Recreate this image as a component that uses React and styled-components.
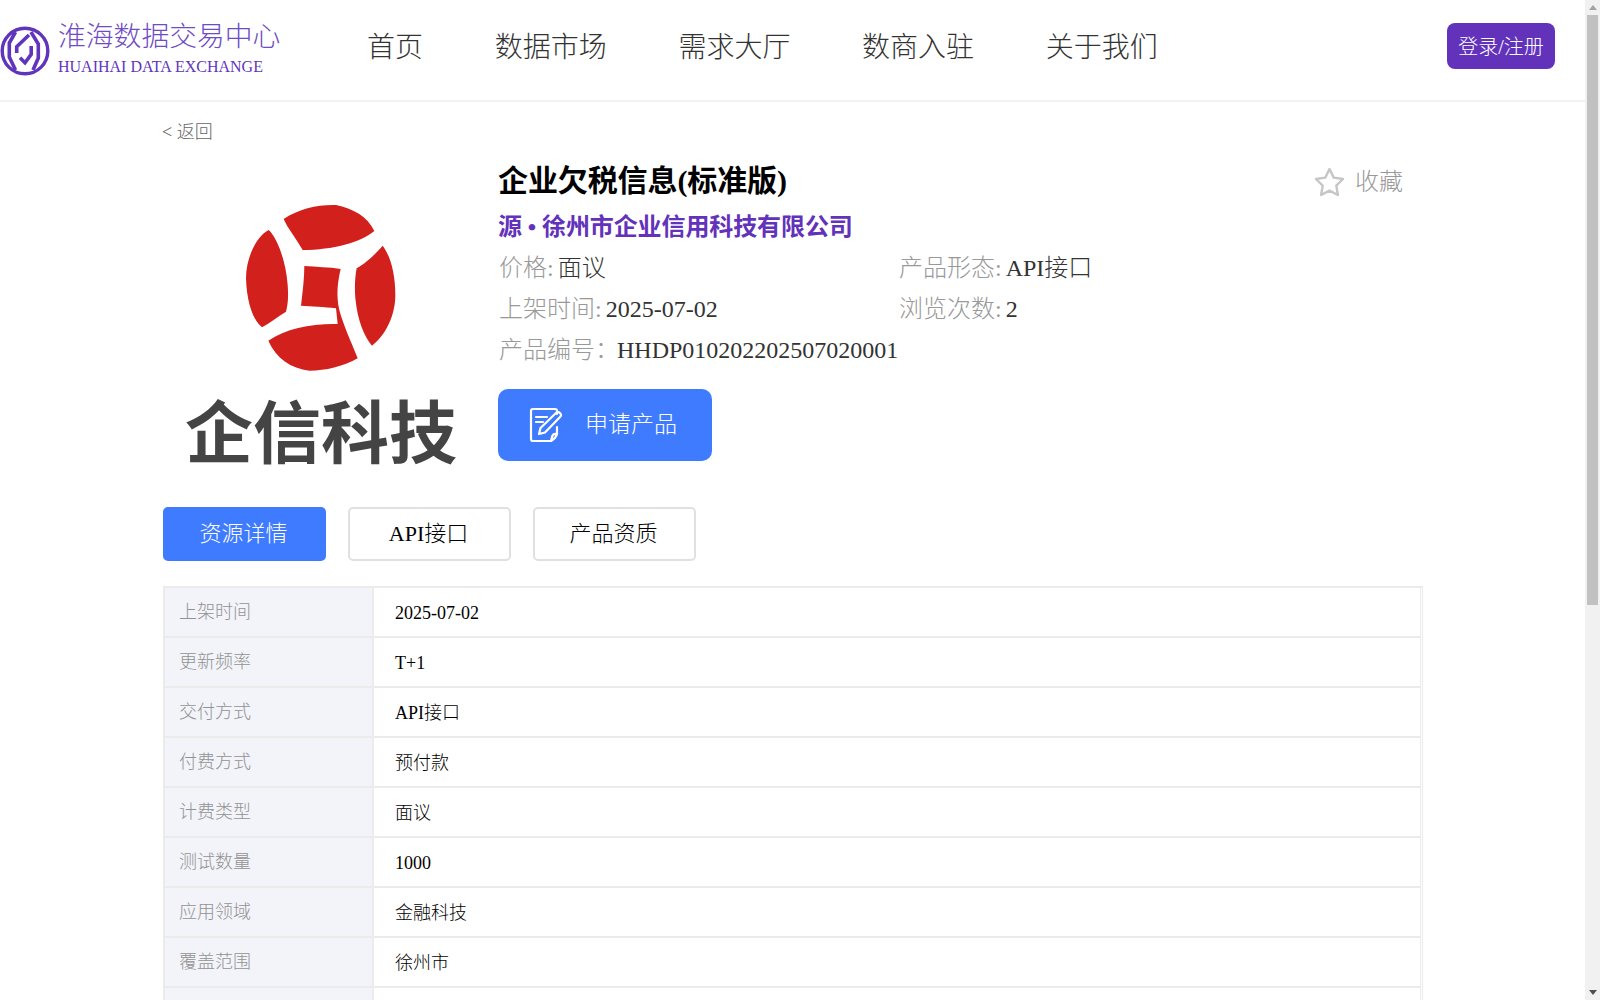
import React from "react";
import styled, { createGlobalStyle } from "styled-components";

const Global = createGlobalStyle`
  html, body { margin: 0; padding: 0; background: #fff; }
  body {
    font-family: "Liberation Serif", "Noto Sans CJK SC", serif;
    font-weight: 300;
    line-height: 1.2;
    color: #333;
  }
  * { box-sizing: border-box; }
`;

const Page = styled.div`
  width: 1585px;
  min-height: 1645px;
`;

const ScrollTrack = styled.div`
  position: fixed;
  top: 0;
  right: 0;
  bottom: 0;
  width: 15px;
  background: #f1f1f1;
  display: flex;
  flex-direction: column;
  align-items: center;
`;

const ScrollArrow = styled.div`
  width: 0;
  height: 0;
  flex: none;
  margin: 5px 0;
  border-left: 4px solid transparent;
  border-right: 4px solid transparent;
  ${(p) => (p.$down ? "border-top: 5px solid #505050; margin-top: auto;" : "border-bottom: 5px solid #a3a3a3;")}
`;

const ScrollThumb = styled.div`
  width: 11px;
  height: 590px;
  background: #c1c1c1;
`;

const Header = styled.header`
  height: 102px;
  border-bottom: 2px solid #f2f2f2;
  display: flex;
  align-items: center;
  padding-right: 30px;
`;

const Brand = styled.div`
  display: flex;
  align-items: center;
  width: 367px;
  flex: none;
  gap: 8px;
`;

const BrandMark = styled.svg`
  width: 50px;
  height: 50px;
  flex: none;
  margin-top: 1px;
`;

const BrandText = styled.div`
  display: flex;
  flex-direction: column;
  color: #6f4cc4;
  margin-top: -4px;
`;

const BrandName = styled.div`
  font-size: 27.8px;
  line-height: 34px;
  white-space: nowrap;
`;

const BrandSub = styled.div`
  font-size: 16px;
  line-height: 20px;
  white-space: nowrap;
  margin-top: 3px;
  color: #6035bd;
`;

const Nav = styled.nav`
  display: flex;
  gap: 71.7px;
  flex: 1;
  padding-bottom: 4px;
`;

const NavItem = styled.a`
  font-size: 28px;
  color: #333;
  white-space: nowrap;
`;

const LoginButton = styled.button`
  width: 108px;
  height: 46px;
  margin-bottom: 8px;
  border: 0;
  border-radius: 8px;
  background: #6232bb;
  color: #fff;
  font: inherit;
  font-size: 20px;
  padding: 1px 0 0;
`;

const Container = styled.main`
  width: 1260px;
  margin-left: 163px;
`;

const BackLink = styled.a`
  display: block;
  margin-left: -1px;
  font-size: 18px;
  line-height: 22px;
  color: #666;
  padding-top: 19px;
`;

const Detail = styled.section`
  display: flex;
  margin-top: 18px;
  height: 300px;
`;

const Cover = styled.div`
  width: 316px;
  margin-right: 20px;
  flex: none;
  display: flex;
  flex-direction: column;
  align-items: center;
`;

const CoverMark = styled.svg`
  width: 170px;
  height: 190px;
  margin-top: 34px;
  flex: none;
  filter: blur(0.4px);
`;

const CoverName = styled.div`
  font-family: "Noto Sans CJK SC", sans-serif;
  font-weight: 700;
  font-size: 68px;
  line-height: 80px;
  color: #444;
  white-space: nowrap;
  margin-top: 4px;
  filter: blur(0.7px);
`;

const Info = styled.div`
  flex: 1;
  position: relative;
`;

const Title = styled.h1`
  margin: 0 0 0 -1px;
  font-size: 30px;
  line-height: 40px;
  font-weight: 700;
  letter-spacing: -0.1px;
  color: #000;
`;

const Source = styled.div`
  font-size: 24px;
  line-height: 40px;
  font-weight: 700;
  letter-spacing: -0.1px;
  color: #6232bb;
  margin: 6px 0 0 -1px;
`;

const Facts = styled.div`
  display: grid;
  grid-template-columns: 400px 1fr;
  grid-auto-rows: 41px;
  font-size: 24px;
  line-height: 41px;
  margin-top: 1px;
`;

const Fact = styled.div`
  color: #999;
  white-space: nowrap;
`;

const FactValue = styled.span`
  color: #333;
  margin-left: -2px;
`;

const ApplyButton = styled.button`
  display: flex;
  align-items: center;
  width: 214px;
  height: 72px;
  margin-top: 18px;
  margin-left: -1px;
  padding: 0 0 0 31px;
  gap: 22px;
  border: 0;
  border-radius: 10px;
  background: #3e7bff;
  color: #fff;
  font: inherit;
  font-size: 23px;
`;

const ApplyIcon = styled.svg`
  width: 34px;
  height: 36px;
  flex: none;
`;

const Favorite = styled.div`
  position: absolute;
  top: 6px;
  right: 20px;
  display: flex;
  align-items: center;
  gap: 10px;
  font-size: 24px;
  color: #999;
`;

const StarIcon = styled.svg`
  width: 31px;
  height: 31px;
  flex: none;
`;

const Tabs = styled.div`
  display: flex;
  gap: 22px;
  margin-top: 46px;
`;

const Tab = styled.div`
  width: 163px;
  height: 54px;
  display: flex;
  align-items: center;
  justify-content: center;
  padding: 1px 2px 0 0;
  font-size: 22px;
  border-radius: 5px;
  border: 2px solid ${(p) => (p.$active ? "#3e7bff" : "#e0e0e0")};
  background: ${(p) => (p.$active ? "#3e7bff" : "#fff")};
  color: ${(p) => (p.$active ? "#fff" : "#000")};
`;

const Table = styled.div`
  margin-top: 25px;
  border-top: 2px solid #ebebeb;
  border-left: 2px solid #ebebeb;
  border-right: 1px solid #ebebeb;
  padding-right: 1px;
`;

const Row = styled.div`
  display: grid;
  grid-template-columns: 209px 1fr;
  height: 50px;
  border-bottom: 2px solid #ebebeb;
  border-right: 1px solid #ebebeb;
`;

const Label = styled.div`
  display: flex;
  align-items: center;
  padding: 2px 0 0 14px;
  background: #f2f4f9;
  border-right: 2px solid #ebebeb;
  font-size: 18px;
  color: #929292;
`;

const Value = styled.div`
  display: flex;
  align-items: center;
  padding: 3px 0 0 21px;
  font-size: 18px;
  color: #000;
`;

const rows = [
  ["上架时间", "2025-07-02"],
  ["更新频率", "T+1"],
  ["交付方式", "API接口"],
  ["付费方式", "预付款"],
  ["计费类型", "面议"],
  ["测试数量", "1000"],
  ["应用领域", "金融科技"],
  ["覆盖范围", "徐州市"],
  ["", ""],
];

export default function App() {
  return (
    <Page>
      <Global />
      <Header>
        <Brand>
          <BrandMark viewBox="0 0 50 50" fill="none" stroke="#6035bd">
            <circle cx="25" cy="25" r="22.8" strokeWidth="3.4" />
            <path d="M15.5 6 L9.3 17 V31 L15.5 44" strokeWidth="3.6" />
            <path d="M16.7 27 V20.7 L29 9" strokeWidth="3.6" />
            <path d="M31 6 L38.3 18 V32 L33 44" strokeWidth="3.6" />
            <path d="M20 31.7 L25 36.7 L31.2 28.3 V20" strokeWidth="3.6" />
          </BrandMark>
          <BrandText>
            <BrandName>淮海数据交易中心</BrandName>
            <BrandSub>HUAIHAI DATA EXCHANGE</BrandSub>
          </BrandText>
        </Brand>
        <Nav>
          <NavItem>首页</NavItem>
          <NavItem>数据市场</NavItem>
          <NavItem>需求大厅</NavItem>
          <NavItem>数商入驻</NavItem>
          <NavItem>关于我们</NavItem>
        </Nav>
        <LoginButton>登录/注册</LoginButton>
      </Header>
      <Container>
        <BackLink>&lt; 返回</BackLink>
        <Detail>
          <Cover>
            <CoverMark viewBox="0 0 510 570" fill="#d2201c">
              <path d="M143 72 C190 40 250 28 300 30 C350 40 395 65 415 108 C375 142 290 165 200 165 C180 130 155 100 143 72 Z" />
              <path d="M98 105 C125 130 150 200 155 270 C158 310 155 330 150 350 C125 365 100 385 78 397 C50 375 32 320 30 250 C30 190 60 125 98 105 Z" />
              <path d="M440 152 C465 185 478 240 478 300 C478 360 450 420 408 452 C385 425 365 380 358 310 C355 270 358 240 362 220 C390 205 420 175 440 152 Z" />
              <path d="M205 213 C240 216 280 216 314 222 C305 260 300 300 310 345 C320 385 345 440 365 490 C320 515 270 527 220 527 C165 520 120 490 97 437 C150 400 230 385 305 387 L300 340 C265 335 225 335 195 332 C200 290 205 250 205 213 Z" />
            </CoverMark>
            <CoverName>企信科技</CoverName>
          </Cover>
          <Info>
            <Title>企业欠税信息(标准版)</Title>
            <Source>源 • 徐州市企业信用科技有限公司</Source>
            <Facts>
              <Fact>价格: <FactValue>面议</FactValue></Fact>
              <Fact>产品形态: <FactValue>API接口</FactValue></Fact>
              <Fact>上架时间: <FactValue>2025-07-02</FactValue></Fact>
              <Fact>浏览次数: <FactValue>2</FactValue></Fact>
              <Fact>产品编号：<FactValue>HHDP010202202507020001</FactValue></Fact>
            </Facts>
            <ApplyButton>
              <ApplyIcon viewBox="0 0 34 36" fill="none" stroke="#fff" strokeWidth="2.2" strokeLinecap="round" strokeLinejoin="round">
                <path d="M22 34 H4 Q2 34 2 32 V4 Q2 2 4 2 H26 Q28 2 28 4 V7" />
                <path d="M7 10 H18 M7 15 H14" />
                <path d="M10 27 L11.5 21 L27 6 Q29 4 31 6 Q33 8 31 10 L16 25.5 Z" />
                <path d="M28 20 V27 Q24 26 23 30 L22 34 Q27 31 28 27" />
              </ApplyIcon>
              申请产品
            </ApplyButton>
            <Favorite>
              <StarIcon viewBox="0 0 31 31" fill="none" stroke="#c6c6c6" strokeWidth="2.4" strokeLinejoin="round">
                <path d="M15.5 2 L19.7 10.6 L29 12 L22.3 18.6 L23.9 28 L15.5 23.6 L7.1 28 L8.7 18.6 L2 12 L11.3 10.6 Z" />
              </StarIcon>
              收藏
            </Favorite>
          </Info>
        </Detail>
        <Tabs>
          <Tab $active>资源详情</Tab>
          <Tab>API接口</Tab>
          <Tab>产品资质</Tab>
        </Tabs>
        <Table>
          {rows.map(([label, value], i) => (
            <Row key={i}>
              <Label>{label}</Label>
              <Value>{value}</Value>
            </Row>
          ))}
        </Table>
      </Container>
      <ScrollTrack>
        <ScrollArrow />
        <ScrollThumb />
        <ScrollArrow $down />
      </ScrollTrack>
    </Page>
  );
}
